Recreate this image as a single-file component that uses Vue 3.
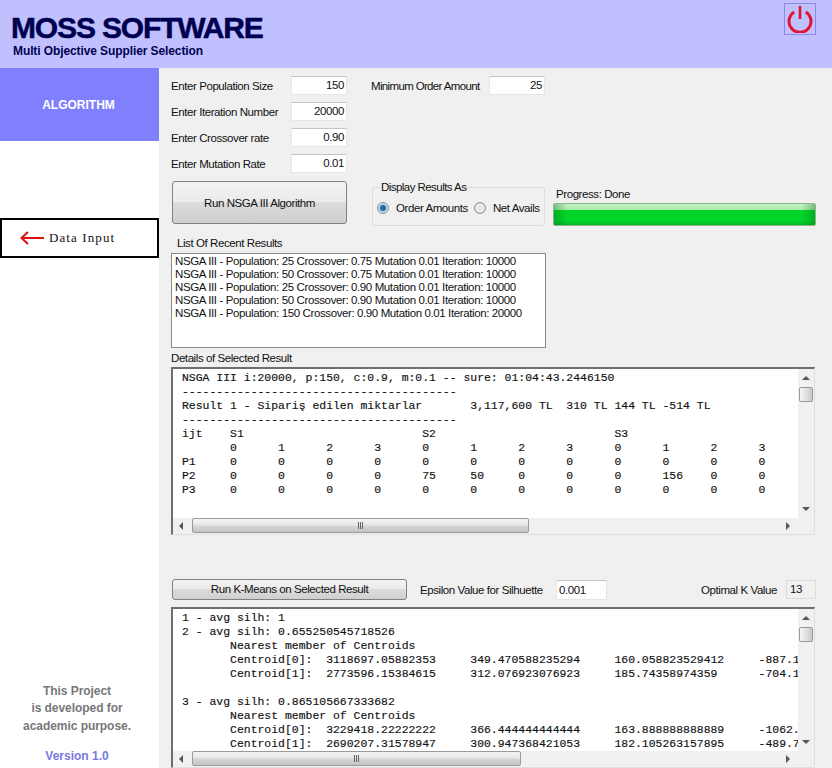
<script setup>
const params = [
  { label: 'Enter Population Size', value: '150' },
  { label: 'Enter Iteration Number', value: '20000' },
  { label: 'Enter Crossover rate', value: '0.90' },
  { label: 'Enter Mutation Rate', value: '0.01' },
]
const recent = [
  'NSGA III - Population: 25 Crossover: 0.75 Mutation 0.01 Iteration: 10000',
  'NSGA III - Population: 50 Crossover: 0.75 Mutation 0.01 Iteration: 10000',
  'NSGA III - Population: 25 Crossover: 0.90 Mutation 0.01 Iteration: 10000',
  'NSGA III - Population: 50 Crossover: 0.90 Mutation 0.01 Iteration: 10000',
  'NSGA III - Population: 150 Crossover: 0.90 Mutation 0.01 Iteration: 20000',
]
const dash = '-'.repeat(40)
const details = [
  'NSGA III i:20000, p:150, c:0.9, m:0.1 -- sure: 01:04:43.2446150',
  dash,
  'Result 1 - Sipariş edilen miktarlar       3,117,600 TL  310 TL 144 TL -514 TL',
  dash,
  'ijt    S1                          S2                          S3',
  '       0      1      2      3      0      1      2      3      0      1      2      3',
  'P1     0      0      0      0      0      0      0      0      0      0      0      0',
  'P2     0      0      0      0      75     50     0      0      0      156    0      0',
  'P3     0      0      0      0      0      0      0      0      0      0      0      0',
]
const kmeans = [
  '1 - avg silh: 1',
  '2 - avg silh: 0.655250545718526',
  '       Nearest member of Centroids',
  '       Centroid[0]:  3118697.05882353     349.470588235294     160.058823529412     -887.176470588235',
  '       Centroid[1]:  2773596.15384615     312.076923076923     185.74358974359      -704.102564102564',
  ' ',
  '3 - avg silh: 0.865105667333682',
  '       Nearest member of Centroids',
  '       Centroid[0]:  3229418.22222222     366.444444444444     163.888888888889     -1062.33333333333',
  '       Centroid[1]:  2690207.31578947     300.947368421053     182.105263157895     -489.736842105263',
]
const panels = [
  { id: 'details', lines: details, size: 'panel-tall', thumb: 'thumb-long' },
  { id: 'kmeans', lines: kmeans, size: 'panel-short', thumb: 'thumb-short' },
]
</script>

<template>
  <div class="app">
    <header class="top">
      <div class="brand">
        <div class="title">MOSS SOFTWARE</div>
        <div class="subtitle">Multi Objective Supplier Selection</div>
      </div>
      <button class="power" aria-label="Power">
        <svg width="28" height="28" viewBox="0 0 28 28">
          <path d="M8.2 7 A11 11 0 1 0 19.8 7" fill="none" stroke="#e0142c" stroke-width="3" />
          <path d="M14 1 V14" fill="none" stroke="#e0142c" stroke-width="2.6" />
        </svg>
      </button>
    </header>
    <div class="body">
      <aside class="side">
        <div class="algo">ALGORITHM</div>
        <div class="data-input">
          <svg width="26" height="14" viewBox="0 0 26 14">
            <path d="M25 7 H3 M9 1 L2.5 7 L9 13" fill="none" stroke="#e01010" stroke-width="2" />
          </svg>
          <span>Data Input</span>
        </div>
        <div class="note">
          <p>This Project</p>
          <p>is developed for</p>
          <p>academic purpose.</p>
        </div>
        <div class="version">Version 1.0</div>
      </aside>
      <main class="main">
        <section class="params">
          <div class="param-col">
            <div v-for="p in params" :key="p.label" class="param">
              <label>{{ p.label }}</label>
              <div class="input">{{ p.value }}</div>
            </div>
          </div>
          <div class="param min-order">
            <label>Minimum Order Amount</label>
            <div class="input">25</div>
          </div>
        </section>
        <section class="run-row">
          <button class="btn run">Run NSGA III Algorithm</button>
          <fieldset class="group">
            <legend>Display Results As</legend>
            <span class="radio on"></span><span class="radio-label first">Order Amounts</span>
            <span class="radio"></span><span class="radio-label">Net Avails</span>
          </fieldset>
          <div class="progress">
            <div class="progress-label">Progress: Done</div>
            <div class="bar"></div>
          </div>
        </section>
        <div class="list-label">List Of Recent Results</div>
        <div class="listbox">
          <div v-for="r in recent" :key="r">{{ r }}</div>
        </div>
        <div class="details-label">Details of Selected Result</div>
        <template v-for="panel in panels" :key="panel.id">
          <div v-if="panel.id === 'kmeans'" class="kmeans-row">
            <button class="btn kbtn">Run K-Means on Selected Result</button>
            <span class="eps-label">Epsilon Value for Silhuette</span>
            <div class="input eps">0.001</div>
            <span class="opt-label">Optimal K Value</span>
            <div class="kval">13</div>
          </div>
          <div class="panel" :class="panel.size">
            <pre class="mono">{{ panel.lines.join('\n') }}</pre>
            <div class="vbar">
              <i class="arr up"></i>
              <b class="vthumb"></b>
              <i class="arr down"></i>
            </div>
            <div class="hbar">
              <i class="arr left"></i>
              <b class="hthumb" :class="panel.thumb"></b>
              <i class="arr right"></i>
            </div>
            <div class="corner"></div>
          </div>
        </template>
      </main>
    </div>
  </div>
</template>

<style>
html, body { margin: 0; background: #f0f0f0; }
</style>

<style scoped>
.app {
  width: 832px;
  height: 768px;
  overflow: hidden;
  display: flex;
  flex-direction: column;
  font-family: "Liberation Sans", Arial, sans-serif;
  font-size: 11.5px;
  letter-spacing: -0.42px;
  color: #111;
  background: #f0f0f0;
  white-space: nowrap;
}
.top {
  height: 68px;
  flex: none;
  background: #c0c0ff;
  display: flex;
  justify-content: space-between;
  align-items: flex-start;
  padding: 3px 16px 0 11px;
  box-sizing: border-box;
}
.title {
  margin-top: 9px;
  font-size: 30px;
  line-height: 32px;
  font-weight: bold;
  color: #000050;
  letter-spacing: -1.15px;
  -webkit-text-stroke: 0.5px #000050;
}
.subtitle {
  margin: 0 0 0 2px;
  font-size: 12px;
  line-height: 14px;
  font-weight: bold;
  color: #000050;
  letter-spacing: -0.1px;
}
.power {
  width: 32px;
  height: 32px;
  padding: 0;
  border: 1px solid #8a8ae6;
  background: #c0c0ff;
  display: flex;
  align-items: center;
  justify-content: center;
}
.body { flex: 1; display: flex; min-height: 0; }
.side {
  width: 159px;
  flex: none;
  background: #fff;
  display: flex;
  flex-direction: column;
}
.algo {
  height: 73px;
  background: #8080ff;
  color: #fff;
  font-size: 12px;
  letter-spacing: 0;
  font-weight: bold;
  display: flex;
  align-items: center;
  justify-content: center;
  padding-right: 2px;
  box-sizing: border-box;
}
.data-input {
  margin-top: 77px;
  height: 40px;
  box-sizing: border-box;
  border: 2px solid #000;
  display: flex;
  align-items: center;
  gap: 4px;
  padding-left: 17px;
  font-family: "Liberation Serif", serif;
  font-size: 13px;
  letter-spacing: 1.1px;
  color: #111;
}
.note {
  margin-top: auto;
  padding-right: 5px;
  text-align: center;
  font-size: 12px;
  letter-spacing: -0.05px;
  font-weight: bold;
  color: #777;
}
.note p { margin: 0; line-height: 17.5px; }
.version {
  margin: 12px 0 3px;
  padding-right: 5px;
  height: 18px;
  line-height: 18px;
  text-align: center;
  font-size: 12px;
  letter-spacing: 0;
  font-weight: bold;
  color: #7a7ae0;
}
.main {
  flex: 1;
  min-width: 0;
  padding: 8px 0 0 12px;
  box-sizing: border-box;
}
.params { display: flex; align-items: flex-start; }
.param-col { display: flex; flex-direction: column; gap: 7px; }
.param { display: flex; align-items: center; height: 19px; }
.param label { width: 120px; }
.min-order { margin-left: 24px; }
.min-order label { width: 118px; letter-spacing: -0.65px; }
.input {
  width: 56px;
  height: 19px;
  box-sizing: border-box;
  background: #fff;
  border: 1px solid #e6e6e6;
  border-top-color: #c4c4c4;
  text-align: right;
  padding-right: 2px;
  line-height: 17px;
}
.run-row { display: flex; margin-top: 8px; height: 45px; }
.btn {
  font: inherit;
  letter-spacing: inherit;
  color: #111;
  padding: 0;
  border: 1px solid #808080;
  border-radius: 3px;
  background: linear-gradient(#f3f3f3 0, #ebebeb 48%, #dcdcdc 50%, #cfcfcf 100%);
}
.run { width: 175px; height: 43px; margin-left: 1px; }
.group {
  margin: 0 0 0 25px;
  width: 173px;
  height: 45px;
  box-sizing: border-box;
  padding: 0 0 0 4px;
  border: 1px solid #dcdcdc;
  border-radius: 2px;
  display: block;
  min-inline-size: 0;
}
.group legend { padding: 0 1px; margin-left: 3px; line-height: 13px; letter-spacing: -0.55px; }
.radio {
  display: inline-block;
  width: 12px;
  height: 12px;
  box-sizing: border-box;
  border: 1px solid #8a8a8a;
  border-radius: 50%;
  background: #e8e8e8;
  vertical-align: -2px;
  margin-top: 8px;
}
.radio.on { background: radial-gradient(circle, #1f6fb0 0 2.5px, #9cc8e4 3.5px, #e8e8e8 5px); }
.radio-label { margin-left: 7px; }
.radio-label.first { margin-right: 6px; }
.progress { margin-left: 8px; width: 263px; }
.progress-label { margin: 7px 0 0 3px; height: 15px; line-height: 13px; }
.bar {
  height: 23px;
  box-sizing: border-box;
  border: 1px solid #8fb58f;
  border-radius: 2px;
  background:
    linear-gradient(90deg, rgba(0,100,20,.35), transparent 5%, transparent 95%, rgba(0,100,20,.35)),
    linear-gradient(#c4f0c4 0, #a9eaa9 27%, #02d42a 30%, #02d42a 80%, #06b726 100%);
}
.list-label { margin: 10px 0 0 6px; height: 17px; line-height: 14px; }
.listbox {
  width: 375px;
  height: 95px;
  box-sizing: border-box;
  background: #fff;
  border: 1px solid #8a8a8a;
  padding: 1px 0 0 3px;
  line-height: 13px;
  letter-spacing: -0.39px;
}
.details-label { margin-top: 3px; height: 16px; line-height: 14px; }
.panel {
  width: 644px;
  box-sizing: border-box;
  border-top: 2px solid #6e6e6e;
  border-left: 2px solid #6e6e6e;
  border-right: 1px solid #dfdfdf;
  border-bottom: 1px solid #dfdfdf;
  display: grid;
  grid-template-columns: 1fr 16px;
  grid-template-rows: 1fr 16px;
  background: #fff;
}
.panel-tall { height: 168px; }
.panel-short { height: 161px; }
.mono {
  margin: 0;
  padding: 2px 0 0 9px;
  overflow: hidden;
  min-width: 0;
  min-height: 0;
  font-family: "Liberation Mono", "Courier New", monospace;
  font-size: 11.45px;
  letter-spacing: 0;
  line-height: 14px;
  color: #111;
  -webkit-text-stroke: 0.15px #111;
}
.vbar, .hbar, .corner { background: #f0f0f0; position: relative; }
.vbar { display: flex; flex-direction: column; align-items: center; padding: 7px 0; box-sizing: border-box; }
.vthumb {
  display: block;
  width: 14px;
  height: 15px;
  margin-top: 7px;
  box-sizing: border-box;
  border: 1px solid #9a9a9a;
  border-radius: 2px;
  background: linear-gradient(90deg, #f6f6f6, #dcdcdc 60%, #c8c8c8);
}
.hbar { display: flex; align-items: center; padding: 0 8px 0 6px; box-sizing: border-box; }
.hthumb {
  display: block;
  height: 15px;
  margin: 0 0 1px 9px;
  box-sizing: border-box;
  border: 1px solid #9a9a9a;
  border-radius: 2px;
  background:
    linear-gradient(90deg, #666 1px, transparent 1px, transparent 2px, #666 2px, #666 3px, transparent 3px, transparent 4px, #666 4px, #666 5px, transparent 5px) center / 5px 7px no-repeat,
    linear-gradient(#f4f4f4, #e6e6e6 48%, #d6d6d6 52%, #c4c4c4);
}
.thumb-long { width: 337px; }
.thumb-short { width: 329px; }
.arr { display: block; width: 0; height: 0; border: 3px solid transparent; }
.up { border-top: 0; border-bottom: 4px solid #555; border-left-width: 4px; border-right-width: 4px; }
.down { margin-top: auto; border-bottom: 0; border-top: 4px solid #555; border-left-width: 4px; border-right-width: 4px; }
.left { border-left: 0; border-right: 4px solid #555; border-top-width: 4px; border-bottom-width: 4px; }
.right { margin-left: auto; border-right: 0; border-left: 4px solid #555; border-top-width: 4px; border-bottom-width: 4px; }
.kmeans-row { display: flex; align-items: center; height: 21px; margin-top: 44px; margin-bottom: 7px; }
.kbtn { width: 235px; height: 21px; margin-left: 1px; line-height: 17px; }
.eps-label { margin-left: 13px; width: 136px; }
.eps { width: 51px; height: 20px; text-align: left; padding: 0 0 0 2px; line-height: 18px; }
.opt-label { margin-left: 94px; width: 85px; }
.kval {
  width: 30px;
  height: 19px;
  box-sizing: border-box;
  border: 1px solid #dcdcdc;
  padding-left: 3px;
  line-height: 17px;
}
</style>
